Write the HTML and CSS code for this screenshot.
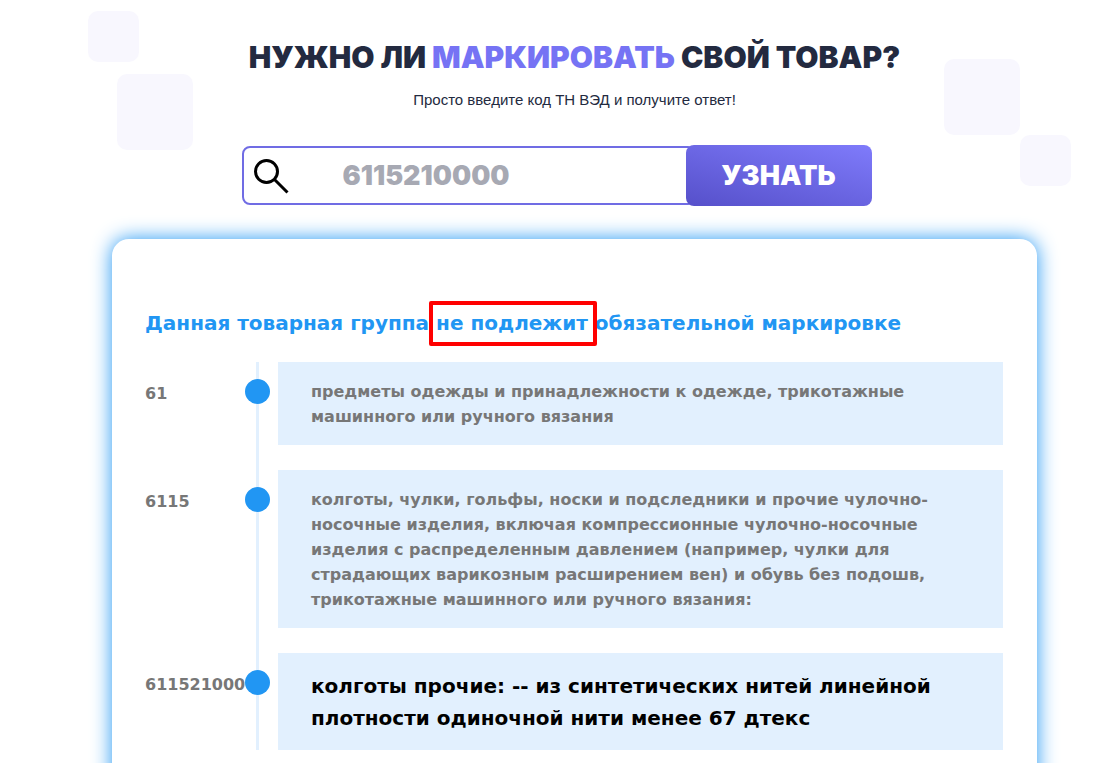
FILE: index.html
```html
<!DOCTYPE html>
<html lang="ru">
<head>
    <meta charset="UTF-8">
    <meta name="viewport" content="width=device-width, initial-scale=1.0">
    <title>Нужно ли маркировать свой товар?</title>
    <link rel="stylesheet" href="styles.css">
</head>
<body>

    <div class="decor decor-left">
        <span class="square small"></span>
        <span class="square big"></span>
    </div>
    <div class="decor decor-right">
        <span class="square big"></span>
        <span class="square small"></span>
    </div>

    <main class="page">
        <section class="intro">
            <h1>Нужно ли <span>маркировать</span> свой товар?</h1>
            <p>Просто введите код ТН ВЭД и получите ответ!</p>
            <form class="search">
                <label class="search-field">
                    <svg width="36" height="36" viewBox="0 0 36 36" fill="none" stroke="#000" stroke-width="3" aria-hidden="true">
                        <circle cx="13.5" cy="13.5" r="11"/>
                        <path d="M21.5 21.5L34.5 34.5"/>
                    </svg>
                    <input type="text" name="code" placeholder="6115210000" aria-label="Код ТН ВЭД">
                </label>
                <button type="submit">Узнать</button>
            </form>
        </section>

        <section class="result">
            <h2>Данная товарная группа <span class="mark">не подлежит</span> обязательной маркировке</h2>
            <ul class="timeline">
                <li>
                    <span class="code">61</span>
                    <span class="dot"></span>
                    <p>предметы одежды и принадлежности к одежде, трикотажные машинного или ручного вязания</p>
                </li>
                <li>
                    <span class="code">6115</span>
                    <span class="dot"></span>
                    <p>колготы, чулки, гольфы, носки и подследники и прочие чулочно-носочные изделия, включая компрессионные чулочно-носочные изделия с распределенным давлением (например, чулки для страдающих варикозным расширением вен) и обувь без подошв, трикотажные машинного или ручного вязания:</p>
                </li>
                <li class="current">
                    <span class="code">6115210000</span>
                    <span class="dot"></span>
                    <p>колготы прочие: -- из синтетических нитей линейной плотности одиночной нити менее 67 дтекс</p>
                </li>
            </ul>
        </section>
    </main>

</body>
</html>
```
FILE: styles.css
```css
* {
    box-sizing: border-box;
}
body {
    margin: 0;
    position: relative;
    overflow-x: hidden;
    background-color: #fff;
    color: #232a40;
    font-family: "Arial Black", Inter, sans-serif;
    font-weight: 900;
}
h1, h2, p, ul {
    margin: 0;
    padding: 0;
}
h1, h2 {
    font-weight: 900;
}
.decor {
    position: absolute;
    z-index: -1;
    display: flex;
    flex-direction: column;
}
.decor-left {
    top: 11px;
    left: 88px;
    width: 105px;
    gap: 12px;
}
.decor-right {
    top: 59px;
    right: 32px;
    width: 127px;
}
.square {
    background-color: #f8f7fe;
    border-radius: 10px;
}
.square.small {
    width: 51px;
    height: 51px;
}
.square.big {
    width: 76px;
    height: 76px;
}
.decor-left .big,
.decor-right .small {
    align-self: flex-end;
}
.page {
    padding: 40px 66px 0 112px;
}
.intro {
    max-width: 666px;
    margin: 0 auto;
    text-align: center;
}
h1 {
    font-size: 30px;
    line-height: 34px;
    text-transform: uppercase;
    white-space: nowrap;
}
h1 span {
    color: #7673f4;
}
.intro p {
    margin-top: 16px;
    font-family: "Liberation Sans", Arial, sans-serif;
    font-size: 15px;
    font-weight: 400;
    line-height: 20px;
}
.search {
    display: flex;
    align-items: center;
    max-width: 630px;
    margin-top: 35px;
}
.search-field {
    flex: 1;
    min-width: 0;
    display: flex;
    align-items: center;
    height: 59px;
    margin-right: -10px;
    padding-left: 9px;
    border: 2px solid #706ce4;
    border-radius: 8px;
}
.search-field svg {
    flex-shrink: 0;
}
.search input {
    flex: 1;
    min-width: 0;
    margin-left: 54px;
    padding: 0;
    border: none;
    outline: none;
    background: none;
    color: #232a40;
    font: inherit;
    font-size: 27px;
}
.search input::placeholder {
    color: #a7a9b3;
}
.search button {
    position: relative;
    flex-shrink: 0;
    width: 186px;
    height: 61px;
    padding: 0;
    border: none;
    border-radius: 8px;
    background: linear-gradient(15deg, #5650ca, #7f7bfb);
    color: #fff;
    font: inherit;
    font-size: 27px;
    text-transform: uppercase;
    cursor: pointer;
}
.result {
    margin-top: 33px;
    padding: 68px 34px 50px 33px;
    border-radius: 17px;
    background-color: #fff;
    box-shadow: 0 0 20px #2196f3;
    font-family: "Arial Black", "DejaVu Sans", sans-serif;
}
h2 {
    color: #2196f3;
    font-size: 20px;
    line-height: 32px;
}
.mark {
    position: relative;
}
/* red frame round the verdict */
.mark::after {
    content: "";
    position: absolute;
    inset: -10px -9px -11px -7px;
    border: 4px solid #f00;
    border-radius: 2px;
}
.timeline {
    position: relative;
    display: flex;
    flex-direction: column;
    gap: 25px;
    margin-top: 23px;
    list-style: none;
}
.timeline::before {
    content: "";
    position: absolute;
    top: 0;
    bottom: 0;
    left: 111px;
    width: 3px;
    background-color: #e2f0fe;
}
.timeline li {
    display: grid;
    grid-template-columns: 100px 25px 1fr;
    align-items: start;
    color: #777;
    font-size: 16px;
    line-height: 25px;
}
.code {
    padding-top: 19px;
}
.dot {
    position: relative;
    width: 25px;
    height: 25px;
    margin-top: 17px;
    border-radius: 50%;
    background-color: #2196f3;
}
.timeline p {
    margin-left: 8px;
    padding: 17px 33px 16px;
    background-color: #e2f0fe;
}
.timeline .current p {
    color: #000;
    font-size: 20px;
    line-height: 32px;
}
```
